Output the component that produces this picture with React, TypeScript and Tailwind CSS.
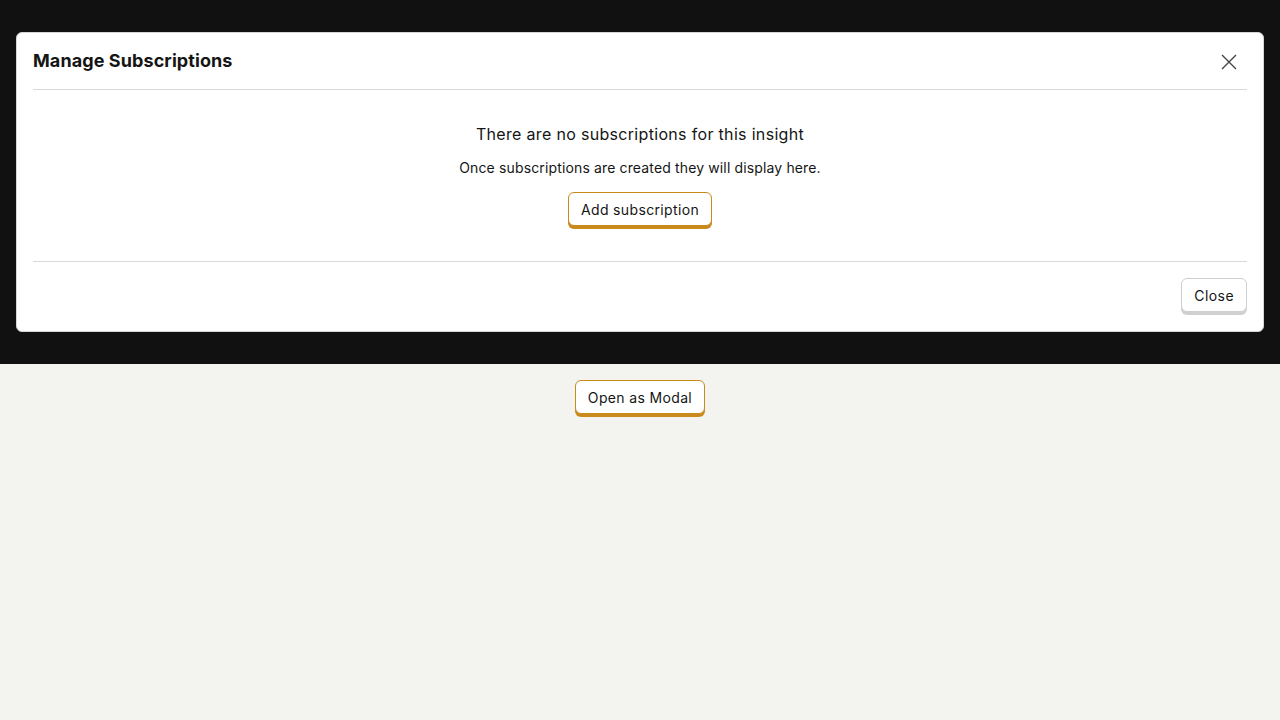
import React from "react";

export default function App() {
  return (
    <div className="min-h-screen bg-[#f3f3ef] text-[#151515]" style={{ fontFamily: "Inter, 'Noto Sans', sans-serif" }}>
      <div className="bg-[#111111] px-4 py-8">
        <div className="bg-white rounded-[6px] border border-[#d6d6d6]">
          <div className="px-4">
            <div className="flex items-center justify-between h-[57px] border-b border-[#d9d9d9]">
              <h2 className="text-[18px] font-bold leading-6 tracking-[0.005em] text-[#151515]">Manage Subscriptions</h2>
              <button className="w-8 h-8 flex items-center justify-center mr-[2px] mt-[2px] text-[#444]">
                <svg width="16" height="16" viewBox="0 0 16 16" fill="none" stroke="currentColor" strokeWidth="1.4">
                  <path d="M1 1L15 15M15 1L1 15" />
                </svg>
              </button>
            </div>
            <div className="flex flex-col items-center pt-[32px] pb-[35px] border-b border-[#d9d9d9]">
              <div className="text-[16px] font-normal leading-6 tracking-[0.02em]">There are no subscriptions for this insight</div>
              <div className="text-[14px] font-normal leading-5 mt-[12px] tracking-[0.01em]">Once subscriptions are created they will display here.</div>
              <button className="mt-[14px] h-[34px] px-3 text-[14px] font-normal tracking-[0.025em] bg-white rounded-[6px] border border-[#c88a1a] shadow-[0_3px_0_#c88a1a]">
                Add subscription
              </button>
            </div>
            <div className="flex justify-end pt-4 pb-[19px]">
              <button className="h-[34px] px-3 text-[14px] font-normal tracking-[0.03em] bg-white rounded-[6px] border border-[#cfcfcf] shadow-[0_3px_0_#d0d0d0]">
                Close
              </button>
            </div>
          </div>
        </div>
      </div>
      <div className="flex justify-center pt-4">
        <button className="h-[34px] px-3 text-[14px] font-normal tracking-[0.025em] bg-white rounded-[6px] border border-[#c88a1a] shadow-[0_3px_0_#c88a1a]">
          Open as Modal
        </button>
      </div>
    </div>
  );
}
